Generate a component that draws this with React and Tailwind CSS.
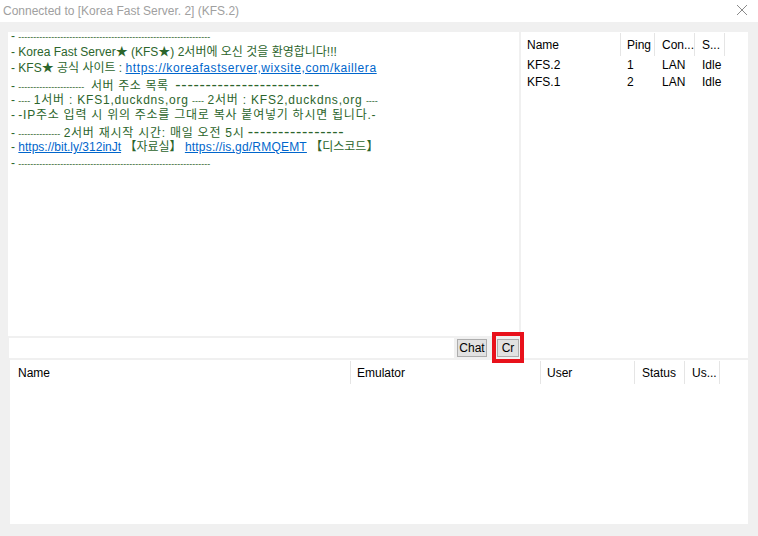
import React from "react";

const FONT = { fontFamily: '"Liberation Sans", "Noto Sans CJK KR", sans-serif' };

// small thin dashes like the server MOTD uses
const Sm = ({ n }) => <span className="text-[9px] leading-none">{"-".repeat(n)}</span>;
const Lg = ({ n }) => (
  <span className="text-[16px] leading-none tracking-[0.7px]">{"-".repeat(n)}</span>
);
const A = ({ children, className = "" }) => (
  <span className={`text-[#0066cc] underline underline-offset-1 ${className}`}>{children}</span>
);

const motd = [
  <>- <Sm n={64} /></>,
  <>- Korea Fast Server★ (KFS★) 2서버에 오신 것을 환영합니다!!!</>,
  <>- KFS★ 공식 사이트 : <A className="tracking-[0.6px]">https://koreafastserver,wixsite,com/kaillera</A></>,
  <>- <Sm n={22} />  <span className="tracking-[0.6px]">서버 주소 목록</span>  <Lg n={24} /></>,
  <>- <Sm n={4} /> <span className="tracking-[0.8px]">1서버 : KFS1,duckdns,org</span> <Sm n={4} /> <span className="tracking-[0.8px]">2서버 : KFS2,duckdns,org</span> <Sm n={4} /></>,
  <>- <span className="tracking-[0.75px]">-IP주소 입력 시 위의 주소를 그대로 복사 붙여넣기 하시면 됩니다.-</span></>,
  <>- <Sm n={14} /> <span className="tracking-[0.75px]">2서버 재시작 시간: 매일 오전 5시</span> <Lg n={16} /></>,
  <>- <A>https://bit.ly/312inJt</A> 【자료실】 <A className="tracking-[0.2px]">https://is,gd/RMQEMT</A> 【디스코드】</>,
  <>- <Sm n={64} /></>,
];

const HeadCell = ({ w, pl = "pl-[6px]", children }) => (
  <div className={`${w} ${pl} h-full flex items-center border-r border-[#e5e5e5] shrink-0`}>
    {children}
  </div>
);

const servers = [
  ["KFS.2", "1", "LAN", "Idle"],
  ["KFS.1", "2", "LAN", "Idle"],
];

export default function App() {
  return (
    <div className="w-[758px] h-[536px] bg-[#f0f0f0] flex flex-col text-[12px] overflow-hidden" style={FONT}>
      {/* title bar */}
      <div className="h-[22px] bg-white flex items-center justify-between pl-[3px] pr-[10px] shrink-0">
        <span className="text-[#a0a0a0] text-[12px]">Connected to [Korea Fast Server. 2] (KFS.2)</span>
        <svg width="12" height="12" viewBox="0 0 12 12" className="mt-[-2px]">
          <path d="M1 1L11 11M11 1L1 11" stroke="#8a8a8a" strokeWidth="1" />
        </svg>
      </div>

      <div className="flex flex-col pt-[10px] pl-[8px] pr-[10px] gap-[2px]">
        <div className="flex gap-[2px] h-[326px]">
          {/* chat column */}
          <div className="w-[511px] flex flex-col gap-[2px]">
            <div className="h-[304px] bg-white overflow-hidden pl-[3px] text-[#2c652c]">
              <div className="-mt-[3px] leading-[15.9px] whitespace-pre">
                {motd.map((l, i) => (
                  <div key={i} className="h-[15.9px]">{l}</div>
                ))}
              </div>
            </div>
            <div className="h-[20px] flex items-center">
              <div className="w-[445px] h-[20px] bg-white ml-[1px]" />
              <button className="ml-[3px] w-[30px] h-[18px] bg-[#e1e1e1] border border-[#adadad] text-black text-[12px] flex items-center justify-center">
                Chat
              </button>
              <div className="relative ml-[10px]">
                <button className="w-[22px] h-[18px] bg-[#e1e1e1] border border-[#adadad] text-black text-[12px] flex items-center justify-center">
                  Cr
                </button>
                <div className="absolute -left-[5px] -top-[7px] w-[32px] h-[31px] border-[4px] border-[#e8111b] pointer-events-none" />
              </div>
            </div>
          </div>

          {/* server list */}
          <div className="w-[227px] bg-white text-black flex flex-col">
            <div className="h-[24px] flex pt-[1px]">
              <HeadCell w="w-[100px]">Name</HeadCell>
              <HeadCell w="w-[34px]">Ping</HeadCell>
              <HeadCell w="w-[40px]" pl="pl-[7px]">Con...</HeadCell>
              <HeadCell w="w-[30px]" pl="pl-[7px]">S...</HeadCell>
            </div>
            {servers.map((r) => (
              <div key={r[0]} className="h-[17px] flex items-center">
                <div className="w-[100px] pl-[6px]">{r[0]}</div>
                <div className="w-[34px] pl-[6px]">{r[1]}</div>
                <div className="w-[40px] pl-[7px]">{r[2]}</div>
                <div className="w-[30px] pl-[7px]">{r[3]}</div>
              </div>
            ))}
          </div>
        </div>

        {/* user / game list */}
        <div className="ml-[2px] h-[164px] bg-white text-black">
          <div className="h-[24px] flex pt-[1px]">
            <HeadCell w="w-[341px]" pl="pl-[8px]">Name</HeadCell>
            <HeadCell w="w-[190px]">Emulator</HeadCell>
            <HeadCell w="w-[94px]">User</HeadCell>
            <HeadCell w="w-[50px]" pl="pl-[7px]">Status</HeadCell>
            <HeadCell w="w-[35px]" pl="pl-[7px]">Us...</HeadCell>
          </div>
        </div>
      </div>
    </div>
  );
}
